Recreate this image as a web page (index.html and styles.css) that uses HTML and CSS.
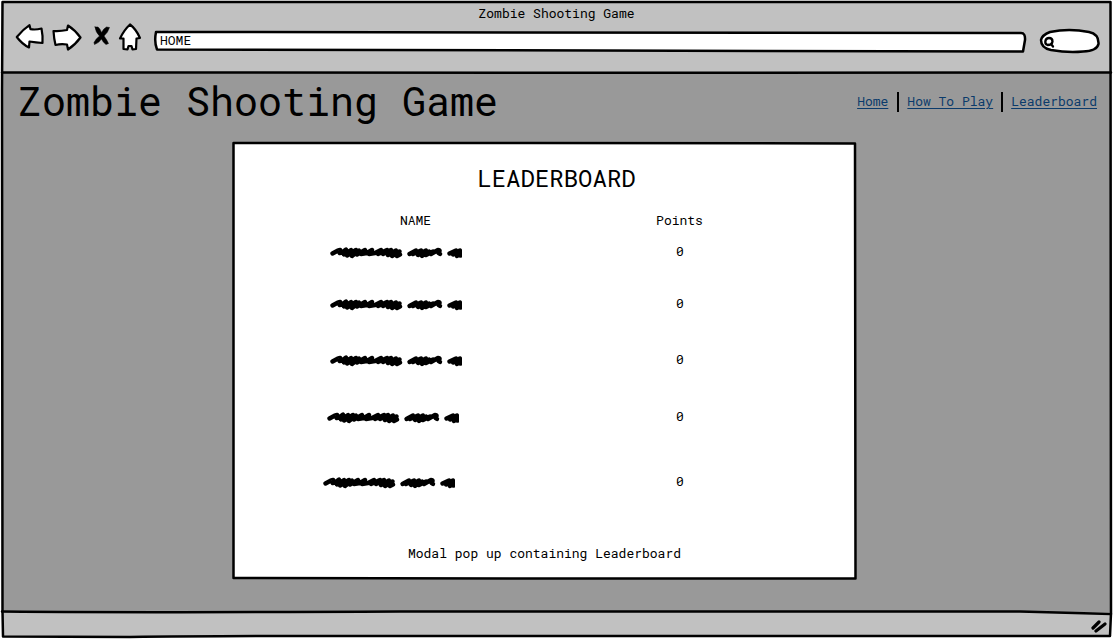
FILE: index.html
```html
<!DOCTYPE html>
<html lang="en">
<head>
<meta charset="utf-8">
<title>Zombie Shooting Game</title>
<link rel="stylesheet" href="styles.css">
</head>
<body>
<svg class="defs" width="0" height="0" aria-hidden="true">
  <symbol id="scribble" viewBox="0 0 132 14" overflow="hidden">
    <path d="M2.500 7.500 L8 4.500 Q11 3 10 5 Q8 8 12 6.500 L16 3.500 L14 8.500 L21 4 L17 9.500 L26 4 L22 10 L29 4.500 L27 8.500 L35 4 L31 8 L37 7 L42 4 L39 8 L45 7 L51 4 L48 8 L57 4 L53 8 L61 4 L58 9 L66 4.500 L62 10 L69.500 5.500 L67 10 L70 8.500"/>
    <path d="M79.500 8 L86 4.500 L83 8 L91 4.500 L88 9 L96 4.500 L92 10 L99 5.500 L96 9 L103 5.500 L101 8 L108 4 Q111 4 108.500 7 L110 8"/>
    <path d="M119.500 7.500 L126 4.500 L123 8.500 L130 4.500 L127 10 L135 4.500 L130 9.500 L136 8.500"/>
  </symbol>
</svg>
<div class="window">
  <svg class="outline" viewBox="0 0 1113 639" aria-hidden="true">
    <path d="M2.500 2 H1110.500 L1111 613 L1110 636 Q800 635 500 636 Q250 635.500 130 637 L3 636.500 L2.500 611 L2 90 Z"/>
    <path d="M2 72.500 Q400 73.500 700 72.800 L1111 72.500"/>
    <path d="M2 611.500 Q160 612.800 400 611.500 H1020 L1111 614"/>
  </svg>
  <header class="chrome">
    <div class="window-title">Zombie Shooting Game</div>
    <div class="toolbar">
      <svg class="nav-icons" viewBox="0 0 130 34" aria-hidden="true">
        <path d="M2.800 16 Q9 8.500 15.500 4.200 L16.500 8.200 Q22 9 27.500 7.500 Q29 15 28.500 22 Q22 21.500 15.500 20.500 L15 26.500 Q8 23 2.800 16 Z"/>
        <path d="M39.500 10 Q46 10.500 53 9 L54 4.500 Q61 9 66.500 16.500 Q61 24 54 28.500 L53 23.500 Q47 22.500 41.500 24 Q40 18 39.500 10 Z"/>
        <path class="cross" d="M81 6 L84 6 Q86.500 8 87.500 11.500 Q89.500 7.500 92.500 6 L95.500 6.500 Q94 11.500 90 15 Q93 19 94.500 22.500 L92 23.500 Q89 21.500 87.500 18 Q85 22 80.500 23.500 L80 21.500 Q82 17.500 85.500 15 Q81.500 11 81 6 Z"/>
        <path d="M116 3.500 Q110 9 106 17.500 L109.500 17.500 L109.500 28 L113.500 28.500 L114.500 25 L117.500 25 L118.500 28.500 L122 28 L122.500 17.500 L126 17 Q122 8 116 3.500 Z"/>
      </svg>
      <div class="address">
        <svg class="address-shape" viewBox="0 0 874 24" aria-hidden="true"><path d="M3 3 Q430 3 868 4 Q872.500 4 872 11 L870 22.500 Q400 20 4 20.500 Q1 13 3 3 Z"/></svg>
        <span>HOME</span>
      </div>
      <svg class="search" viewBox="0 0 62 28" aria-hidden="true">
        <path d="M11 5 Q30 1 50 5 Q60 7 59.500 17 Q58 24 44 24.500 Q29 26 12 23 Q2 21 2 13 Q3 8 11 5 Z"/>
        <path class="lens" d="M10 11 Q13.500 11 13.500 14.500 Q13 18 8.500 18 Q5.500 17 6.500 13.500 Q7.500 11 10 11 Z M12 17 L14 19.500"/>
      </svg>
    </div>
  </header>
  <div class="page">
    <div class="page-head">
      <h1>Zombie Shooting Game</h1>
      <nav>
        <a href="#">Home</a><i></i><a href="#">How To Play</a><i class="tight"></i><a href="#">Leaderboard</a>
      </nav>
    </div>
    <main class="modal">
      <svg class="modal-shape" viewBox="0 0 626 440" aria-hidden="true"><path d="M2.500 3 Q120 2.500 300 3 L624 3.500 L624.500 438.500 L300 438.500 L2.500 438 Z"/></svg>
      <h2>LEADERBOARD</h2>
      <div class="row labels"><span>NAME</span><span>Points</span></div>
      <div class="row r1"><svg><use href="#scribble"/></svg><span>0</span></div>
      <div class="row r2"><svg><use href="#scribble"/></svg><span>0</span></div>
      <div class="row r3"><svg><use href="#scribble"/></svg><span>0</span></div>
      <div class="row r4"><svg><use href="#scribble"/></svg><span>0</span></div>
      <div class="row r5"><svg><use href="#scribble"/></svg><span>0</span></div>
      <p>Modal pop up containing Leaderboard</p>
    </main>
  </div>
  <footer>
    <svg viewBox="0 0 18 16" aria-hidden="true"><path d="M4 10 L10 4 M7 13 L16 6"/></svg>
  </footer>
</div>
</body>
</html>
```
FILE: styles.css
```css
* { box-sizing: border-box; }
body {
  margin: 0;
  background: #fff;
  color: #000;
  font: 13px/18px "Roboto Mono", "DejaVu Sans Mono", monospace;
}
svg {
  display: block;
  fill: none;
  stroke: #000;
  stroke-width: 2.5;
  stroke-linejoin: round;
  stroke-linecap: round;
}
.defs { position: absolute; }
#scribble path { stroke-width: 4.4; }
.window {
  position: relative;
  display: flex;
  flex-direction: column;
  width: 1113px;
  height: 639px;
  padding: 2px 2px 3px;
  overflow: hidden;
}
.outline { position: absolute; inset: 0; width: 1113px; height: 639px; pointer-events: none; z-index: 1; }
.chrome { height: 71px; background: #c1c1c1; }
.window-title { padding: 2px 0 1px; text-align: center; line-height: 18px; }
.toolbar { display: flex; padding-left: 12px; }
.nav-icons { width: 130px; height: 34px; margin-top: -2px; }
.nav-icons path, .address-shape path, .search path { fill: #fff; }
.nav-icons path { stroke-width: 2.2; }
.nav-icons .cross { fill: #000; stroke-width: 0.5; }
.address { position: relative; width: 874px; height: 24px; margin: 6px 0 0 9px; padding: 2px 0 0 7px; }
.address-shape { position: absolute; inset: 0; width: 874px; height: 24px; }
.address span { position: relative; }
.search { width: 62px; height: 28px; margin: 4px 0 0 12px; }
.search .lens { fill: none; stroke-width: 2.3; }
.page { height: 539px; background: #999; }
.page-head { display: flex; justify-content: space-between; height: 67px; padding: 0 14px 0 16px; }
h1 { margin: 0; font-size: 40px; font-weight: 400; line-height: 55px; }
nav { display: flex; margin-top: 19px; height: 20px; }
nav a { color: #0b3b6b; text-decoration: underline; text-underline-offset: 2px; }
nav i { width: 2px; height: 20px; margin: 0 8px 0 9px; background: #000; }
nav .tight { margin-left: 8px; }
.modal {
  position: relative;
  display: flex;
  flex-direction: column;
  width: 626px;
  height: 440px;
  margin-left: 229px;
  text-align: center;
}
.modal-shape { position: absolute; inset: 0; width: 626px; height: 440px; }
.modal-shape path { fill: #fff; }
.modal > :not(.modal-shape) { position: relative; }
h2 { margin: 22px 0 0 25px; font-size: 24px; font-weight: 400; line-height: 32px; }
.row { display: grid; grid-template-columns: 132px 60px; column-gap: 188px; margin-left: 99px; height: 18px; }
.row svg { width: 132px; height: 14px; margin-top: 4px; }
.row span { white-space: nowrap; }
.labels { margin-top: 17px; grid-template-columns: 171px 61px; column-gap: 148px; }
.r1 { margin-top: 13px; }
.r2 { margin-top: 34px; }
.r3 { margin-top: 38px; }
.r4 { margin-top: 39px; }
.r5 { margin-top: 47px; }
.r4 svg { margin-left: -3px; }
.r5 svg { margin-left: -7px; }
p { margin: 54px 0 0 1px; }
footer { display: flex; justify-content: flex-end; height: 24px; padding: 6px 4px 0; background: #c1c1c1; }
footer svg { width: 18px; height: 16px; }
footer path { stroke-width: 3.2; }
```
